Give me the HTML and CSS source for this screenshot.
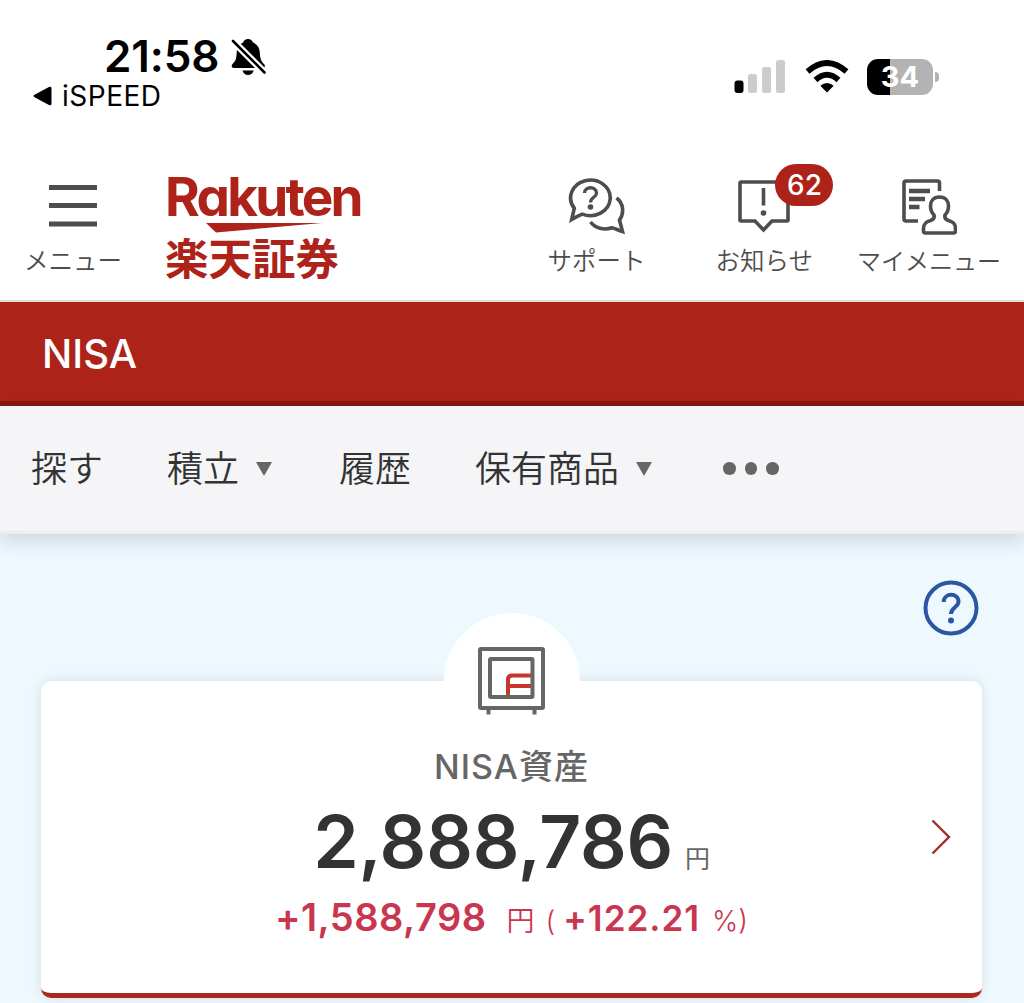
FILE: index.html
```html
<!DOCTYPE html>
<html lang="ja">
<head>
    <meta charset="UTF-8">
    <meta name="viewport" content="width=device-width, initial-scale=1.0">
    <title>NISA | 楽天証券</title>
    <link rel="stylesheet" href="styles.css">
</head>
<body>
    <div class="status-bar">
        <div class="status-left">
            <div class="clock">
                <span class="time">21:58</span>
                <svg class="bell" width="36" height="38" viewBox="0 0 36 38">
                    <path d="M17 1c2.600 0 4.500 1.500 5 3.600 4.500 1.800 6.500 5 6.800 10 .3 6 1.200 8.500 4.200 11.500 1.700 1.800.8 3.900-1.400 3.900H3c-2.300 0-3-2.200-1.500-4 3.500-3.500 3.800-5.500 4.200-11.500.3-5 2.300-8.200 6.500-9.900C12.700 2.400 14.500 1 17 1z"/>
                    <path d="M11.500 32.500h11.200c-.6 2.700-2.800 4.500-5.600 4.500s-5-1.800-5.600-4.500z"/>
                    <path d="M0 1L36 37" stroke="#fff" stroke-width="7"/>
                    <path d="M2 3L33.500 34.500" stroke="#000" stroke-width="2.600" stroke-linecap="round"/>
                </svg>
            </div>
            <div class="back-app">
                <svg width="20" height="20" viewBox="0 0 20 20"><path d="M1.500 8.800L16 1q2.500-.8 2.500 1.200v15.600q0 2-2.500 1.200L1.500 11.200q-2-1.200 0-2.400z"/></svg>
                <span>iSPEED</span>
            </div>
        </div>
        <div class="status-right">
            <svg class="signal" width="52" height="34" viewBox="0 0 52 34">
                <rect x="0.500" y="20.500" width="9" height="12.500" rx="3"/>
                <rect x="14" y="14" width="9" height="19" rx="2.500" fill="#ccc"/>
                <rect x="28" y="7" width="9" height="26" rx="2.500" fill="#ccc"/>
                <rect x="42" y="0" width="9" height="33" rx="2.500" fill="#ccc"/>
            </svg>
            <svg class="wifi" width="44" height="33" viewBox="0 0 44 33">
                <path d="M2.500 11.500Q22-5.500 41.500 11.500M10.500 20Q22 9.500 33.500 20" fill="none" stroke="#000" stroke-width="5.800"/>
                <path d="M22 32.500l-6.700-6.800q6.700-5.500 13.400 0z"/>
            </svg>
            <div class="battery">34</div>
            <div class="battery-cap"></div>
        </div>
    </div>

    <header class="header">
        <a class="menu">
            <svg width="48" height="44" viewBox="0 0 48 44"><path d="M0 3.500h48M0 21.500h48M0 40h48" stroke="#4d4d4d" stroke-width="5"/></svg>
            <span>メニュー</span>
        </a>
        <div class="logo">
            <span class="logo-en">Rakuten</span>
            <svg width="116" height="11" viewBox="0 0 116 11"><path d="M0 1h116L10 10.500z" fill="#ad2319"/></svg>
            <span class="logo-ja">楽天証券</span>
        </div>
        <nav class="header-nav">
            <a class="header-item support">
                <svg width="58" height="58" viewBox="0 0 58 58" fill="none" stroke="#4d4d4d" stroke-width="3.600">
                    <path d="M7.300 30.200A19.800 17.800 0 1 1 15.300 36.100Q9.500 38.500 4.700 41.500L7.300 30.200z"/>
                    <path d="M49.500 20c7 5 8 15 3 22l3 11.500c-5-1.500-7-3-10.500-3.700C37 52.500 28.500 50.500 23.500 44"/>
                    <path d="M17.500 15c0-7 12-7 12 0 0 4.500-6 4-6 9.500" stroke-width="3.300"/>
                    <circle cx="23.500" cy="29" r="2.800" fill="#4d4d4d" stroke="none"/>
                </svg>
                <span>サポート</span>
            </a>
            <a class="header-item news">
                <svg width="52" height="54" viewBox="0 0 52 54" fill="none" stroke="#4d4d4d" stroke-width="3.600">
                    <path d="M3 2h46q1 0 1 1v37q0 1-1 1H34l-8.500 9-8.500-9H3q-1 0-1-1V3q0-1 1-1z"/>
                    <path d="M25.500 8v17.500"/>
                    <circle cx="25.500" cy="33" r="2.800" fill="#4d4d4d" stroke="none"/>
                </svg>
                <span>お知らせ</span>
                <b class="count">62</b>
            </a>
            <a class="header-item mymenu">
                <svg width="56" height="56" viewBox="0 0 56 56" fill="none" stroke="#4d4d4d" stroke-width="3.600">
                    <path d="M38.500 12V4q0-2-2-2H5Q3 2 3 4v36q0 2 2 2h12"/>
                    <path d="M8 12h21M8 20h16M8 28h10.500" stroke-width="4.600"/>
                    <path d="M38.500 18c-6 0-9 4-9 9 0 4 1.500 7 3.500 9 .7 3-.5 4.500-3.500 5.500-5 1.500-7 3.500-7 8V52q0 2 2 2h28q2 0 2-2v-2.500c0-4.500-2-6.500-7-8-3-1-4.200-2.500-3.500-5.500 2-2 3.500-5 3.500-9 0-5-3-9-9-9z"/>
                </svg>
                <span>マイメニュー</span>
            </a>
        </nav>
    </header>

    <h1 class="page-title">NISA</h1>

    <nav class="sub-nav">
        <a>探す</a>
        <a>積立<i class="caret"></i></a>
        <a>履歴</a>
        <a>保有商品<i class="caret"></i></a>
        <a class="dots"><i></i><i></i><i></i></a>
    </nav>

    <main class="content">
        <svg class="help" width="56" height="56" viewBox="0 0 56 56" fill="none" stroke="#2b56a3">
            <circle cx="28" cy="28" r="25.500" stroke-width="4"/>
            <path d="M20.700 22c0-9.500 14.800-9.500 14.800-.5 0 6-7.500 5.500-7.500 12.500" stroke-width="4"/>
            <circle cx="28" cy="40.500" r="3" fill="#2b56a3" stroke="none"/>
        </svg>
        <section class="card">
            <div class="card-icon">
                <svg width="68" height="68" viewBox="0 0 68 68" fill="none" stroke="#666" stroke-width="4">
                    <rect x="2" y="2" width="63" height="59" rx="1"/>
                    <path d="M10.500 62v5.500M56.500 62v5.500"/>
                    <path d="M54 28.500H34q-4 0-4 4V49M30 39h24" stroke="#c7362d"/>
                    <rect x="12" y="12" width="42.500" height="38" rx="1"/>
                </svg>
            </div>
            <h2 class="card-title">NISA資産</h2>
            <p class="amount">2,888,786<small>円</small></p>
            <p class="profit"><b class="gain">+1,588,798</b><span class="yen">円</span><span class="paren">(</span><b class="rate">+122.21</b><span class="pct">%)</span></p>
            <svg class="arrow" width="20" height="36" viewBox="0 0 20 36"><path d="M1.500 1.500L18 18 1.500 34.500" fill="none" stroke="#a12c2a" stroke-width="2.400"/></svg>
        </section>
    </main>
</body>
</html>
```
FILE: styles.css
```css
* {
    box-sizing: border-box;
}
body {
    margin: 0;
    height: 1003px;
    overflow: hidden;
    background: #fff;
    color: #333;
    font-family: Inter, "Noto Sans CJK JP", sans-serif;
}
svg {
    display: block;
    flex-shrink: 0;
}
h1, h2, p {
    margin: 0;
}

/* status bar */
.status-bar {
    display: flex;
    justify-content: space-between;
    height: 150px;
    padding: 35px 85px 0 33px;
    color: #000;
}
.clock {
    display: flex;
    align-items: center;
    height: 43px;
    padding-left: 71px;
}
.time {
    font-size: 44px;
    font-weight: 600;
    letter-spacing: -0.1px;
    line-height: 43px;
}
.bell {
    margin-left: 12px;
}
.back-app {
    display: flex;
    align-items: center;
    gap: 9px;
    height: 36px;
    font-size: 28px;
    letter-spacing: 0.5px;
    line-height: 36px;
}
.status-right {
    display: flex;
    align-items: center;
    height: 83px;
}
.wifi {
    margin-left: 19px;
}
.battery {
    width: 66px;
    height: 36px;
    margin-left: 18px;
    border-radius: 11px;
    background: linear-gradient(90deg, #000 23px, #b3b3b3 23px);
    color: #fff;
    font-size: 29px;
    font-weight: 700;
    line-height: 36px;
    text-align: center;
}
.battery-cap {
    width: 4px;
    height: 10px;
    margin-left: 2px;
    border-radius: 0 5px 5px 0;
    background: #b3b3b3;
}

/* header */
.header {
    display: flex;
    height: 152px;
    border-bottom: 2px solid #e4dedd;
    color: #4d4d4d;
    font-family: "Noto Sans CJK JP", sans-serif;
    font-size: 24.500px;
    font-weight: 350;
    line-height: 36px;
    white-space: nowrap;
}
.menu {
    display: flex;
    flex-direction: column;
    align-items: center;
    width: 146px;
    padding-top: 34px;
}
.menu span {
    margin-top: 14px;
}
.logo {
    display: flex;
    flex-direction: column;
    width: 260px;
    padding: 20px 0 0 19px;
    color: #ad2319;
}
.logo-en {
    font-family: Inter, sans-serif;
    font-size: 53px;
    font-weight: 700;
    font-feature-settings: "cv11";
    letter-spacing: -2.700px;
    line-height: 54px;
}
.logo svg {
    margin: -2px 0 0 41px;
}
.logo-ja {
    font-size: 43.500px;
    font-weight: 700;
    line-height: 46px;
    margin-top: 1px;
}
.header-nav {
    display: flex;
    margin-left: auto;
    padding-right: 23px;
}
.header-item {
    position: relative;
    display: flex;
    flex-direction: column;
    align-items: center;
    padding-top: 28px;
}
.header-item svg {
    height: 58px;
}
.header-item span {
    margin-top: 6px;
}
.news {
    margin-left: 70px;
}
.mymenu {
    margin-left: 44px;
    font-size: 24px;
}
.count {
    position: absolute;
    top: 14px;
    left: 60px;
    width: 58px;
    height: 42px;
    border-radius: 21px;
    background: #ad2319;
    color: #fff;
    font-family: Inter, sans-serif;
    font-size: 28px;
    font-weight: 500;
    line-height: 42px;
    text-align: center;
}

/* page title */
.page-title {
    height: 104px;
    padding-left: 42px;
    border-bottom: 5px solid #86150f;
    background: #ad2319;
    color: #fff;
    font-size: 40px;
    font-weight: 500;
    line-height: 103px;
}

/* sub navigation */
.sub-nav {
    position: relative;
    display: flex;
    height: 128px;
    padding-left: 31px;
    border-bottom: 3px solid #ecedf0;
    background: #f5f5f8;
    box-shadow: 0 8px 18px rgba(0, 0, 0, 0.13);
    font-family: "Noto Sans CJK JP", sans-serif;
    font-size: 36px;
    font-weight: 350;
    line-height: 120px;
}
.sub-nav a {
    display: flex;
    height: 120px;
    align-items: center;
    margin-right: 64px;
}
.caret {
    margin: 5px 3px 0 17px;
    border: 8px solid transparent;
    border-top: 14px solid #666;
    border-bottom: 0;
}
.dots {
    gap: 9px;
    margin-left: 4px;
}
.dots i {
    width: 12.500px;
    height: 12.500px;
    margin-top: 5px;
    border-radius: 50%;
    background: #666;
}

/* NISA balance */
.content {
    height: 469px;
    padding: 46px 42px 0 41px;
    background: #edf9ff;
}
.help {
    margin-left: auto;
    margin-right: 3px;
}
.card {
    position: relative;
    height: 317px;
    margin-top: 45px;
    border-bottom: 5px solid #a92820;
    border-radius: 10px;
    background: #fff;
    box-shadow: 0 0 12px rgba(0, 0, 0, 0.11);
    text-align: center;
}
.card-icon {
    position: absolute;
    top: -68px;
    left: 403px;
    width: 136px;
    height: 136px;
    padding: 34px;
    border-radius: 50%;
    background: #fff;
}
.card-title {
    padding-top: 61px;
    color: #666;
    font-size: 34px;
    font-weight: 500;
    letter-spacing: 1px;
    line-height: 50px;
}
.amount {
    height: 90px;
    font-size: 73px;
    font-weight: 600;
    line-height: 99px;
    letter-spacing: -0.2px;
    white-space: nowrap;
}
.amount small {
    margin-left: 12px;
    color: #666;
    font-size: 25px;
    font-weight: 400;
}
.profit {
    display: flex;
    justify-content: center;
    align-items: baseline;
    color: #c93650;
    font-size: 28px;
    font-weight: 350;
    line-height: 71px;
}
.gain {
    font-size: 38px;
    font-weight: 600;
    letter-spacing: 0.5px;
}
.yen {
    margin-left: 20px;
}
.paren {
    margin: 0 8px 0 11px;
}
.rate {
    font-size: 35px;
    font-weight: 600;
    letter-spacing: 1px;
}
.pct {
    margin-left: 12px;
}
.arrow {
    position: absolute;
    top: 138px;
    right: 31px;
}
```
